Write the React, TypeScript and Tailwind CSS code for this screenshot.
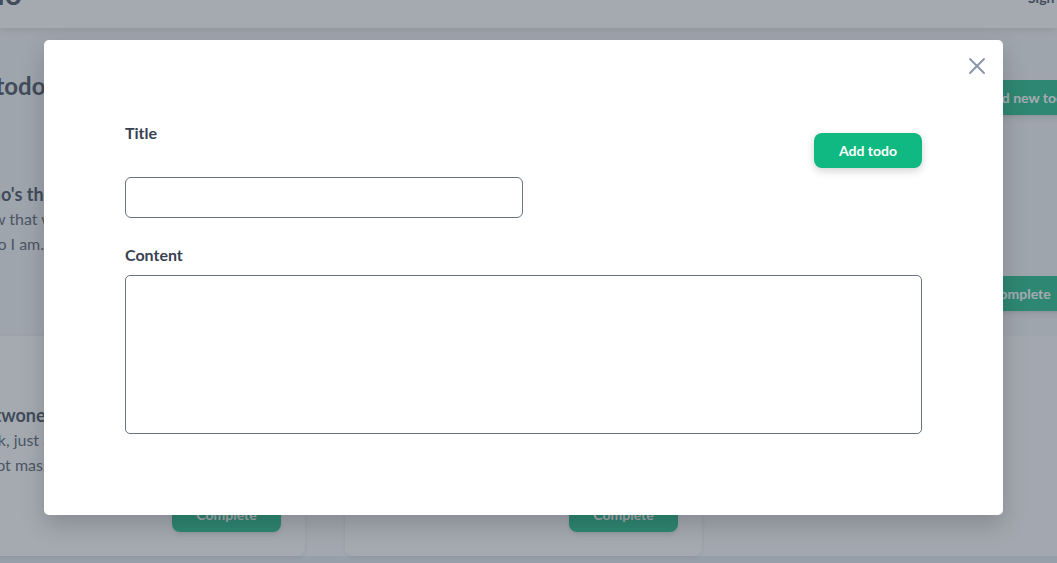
import { X } from "lucide-react";

type Todo = {
  title: string;
  lines: string[];
};

const topRow: (Todo | null)[] = [
  { title: "Who's the boss", lines: ["Now that we know", "Who I am."] },
  { title: "Something", lines: ["Lorem ipsum dolor", "sit amet."] },
  { title: "Just tell me about the money", lines: ["And I don't even care if she stays", "Cause money ain't the thing"] },
];

const bottomRow: (Todo | null)[] = [
  { title: "Antwone Fisher", lines: ["Look, just a movie", "Is not massive"] },
  { title: "Another one", lines: ["Some text here", "and some more"] },
  null,
];

function TodoCard({ todo, boxed }: { todo: Todo | null; boxed?: boolean }) {
  if (!todo) return <div />;
  return (
    <div
      className={
        boxed
          ? "flex flex-col rounded-lg bg-white px-6 pb-6 pt-[67px] shadow-[0_1px_4px_rgba(30,41,59,0.12)]"
          : "flex flex-col px-6 pb-6 pt-[67px]"
      }
    >
      <h3 className="whitespace-nowrap text-lg font-bold leading-6 text-[#374151]">{todo.title}</h3>
      {todo.lines.map((line) => (
        <p key={line} className="whitespace-nowrap text-base leading-[25px] text-[#4b5563]">
          {line}
        </p>
      ))}
      <button className="ml-auto mt-5 h-[35px] w-[109px] rounded-lg bg-[#10b981] text-sm font-bold text-white shadow-md">
        Complete
      </button>
    </div>
  );
}

function AddTodoModal() {
  return (
    <div className="absolute inset-0 z-20 bg-[#4b5563]/50 pl-[44px] pt-[40px]">
      <div className="relative w-[959px] rounded-[5px] bg-white p-[81px] shadow-[0_10px_25px_rgba(0,0,0,0.18)]">
        <button className="absolute right-[12px] top-[12px] text-[#8796ab]">
          <X size={28} strokeWidth={1.6} />
        </button>

        <div className="flex items-start justify-between">
          <div className="flex w-[398px] flex-col">
            <label className="text-base font-bold leading-6 text-[#374151]">Title</label>
            <input className="mt-8 h-[41px] w-full rounded-md border border-[#6b7280] px-3 outline-none" />
          </div>
          <button className="mt-3 h-[35px] rounded-lg bg-[#10b981] px-[25px] text-sm font-bold text-white shadow-[0_3px_8px_rgba(0,0,0,0.18)]">
            Add todo
          </button>
        </div>

        <label className="mt-[25px] block text-base font-bold leading-6 text-[#374151]">Content</label>
        <textarea className="mt-2 block h-[159px] w-full resize-none rounded-[5px] border border-[#6b7280] px-3 py-2 outline-none" />
      </div>
    </div>
  );
}

export default function App() {
  return (
    <div className="relative h-[563px] w-[1057px] overflow-hidden bg-[#f3f4f6] font-['Lato','Noto_Sans',sans-serif]">
      <header className="relative h-[28px] overflow-hidden bg-white shadow-[0_2px_8px_rgba(0,0,0,0.12)]">
        <div className="-ml-[52px] flex w-[1151px] items-start justify-between">
          <span className="-mt-[25px] ml-[8px] text-3xl font-bold leading-9 text-[#374151]">Todo</span>
          <span className="-mt-[12px] mr-[20px] text-sm font-bold leading-5 text-[#374151]">Sign out</span>
        </div>
      </header>

      <main className="-ml-[52px] w-[1151px]">
        <div className="mt-[42px] flex items-start justify-between">
          <h1 className="-ml-[7px] text-2xl font-bold leading-8 text-[#374151]">Your todos</h1>
          <button className="mt-[10px] h-[35px] rounded-lg bg-[#10b981] px-[27px] text-sm font-bold text-white shadow-md">
            Add new todo
          </button>
        </div>

        <div className="grid grid-cols-3 gap-x-10">
          {topRow.map((todo, i) => (
            <TodoCard key={i} todo={todo} />
          ))}
        </div>
      </main>

      <section className="mt-px bg-[#fafbfc]">
        <div className="-ml-[52px] grid w-[1151px] grid-cols-3 gap-x-10">
          {bottomRow.map((todo, i) => (
            <TodoCard key={i} todo={todo} boxed />
          ))}
        </div>
      </section>
      <div className="h-[20px] bg-[#e2e8f0]" />

      <AddTodoModal />
    </div>
  );
}
